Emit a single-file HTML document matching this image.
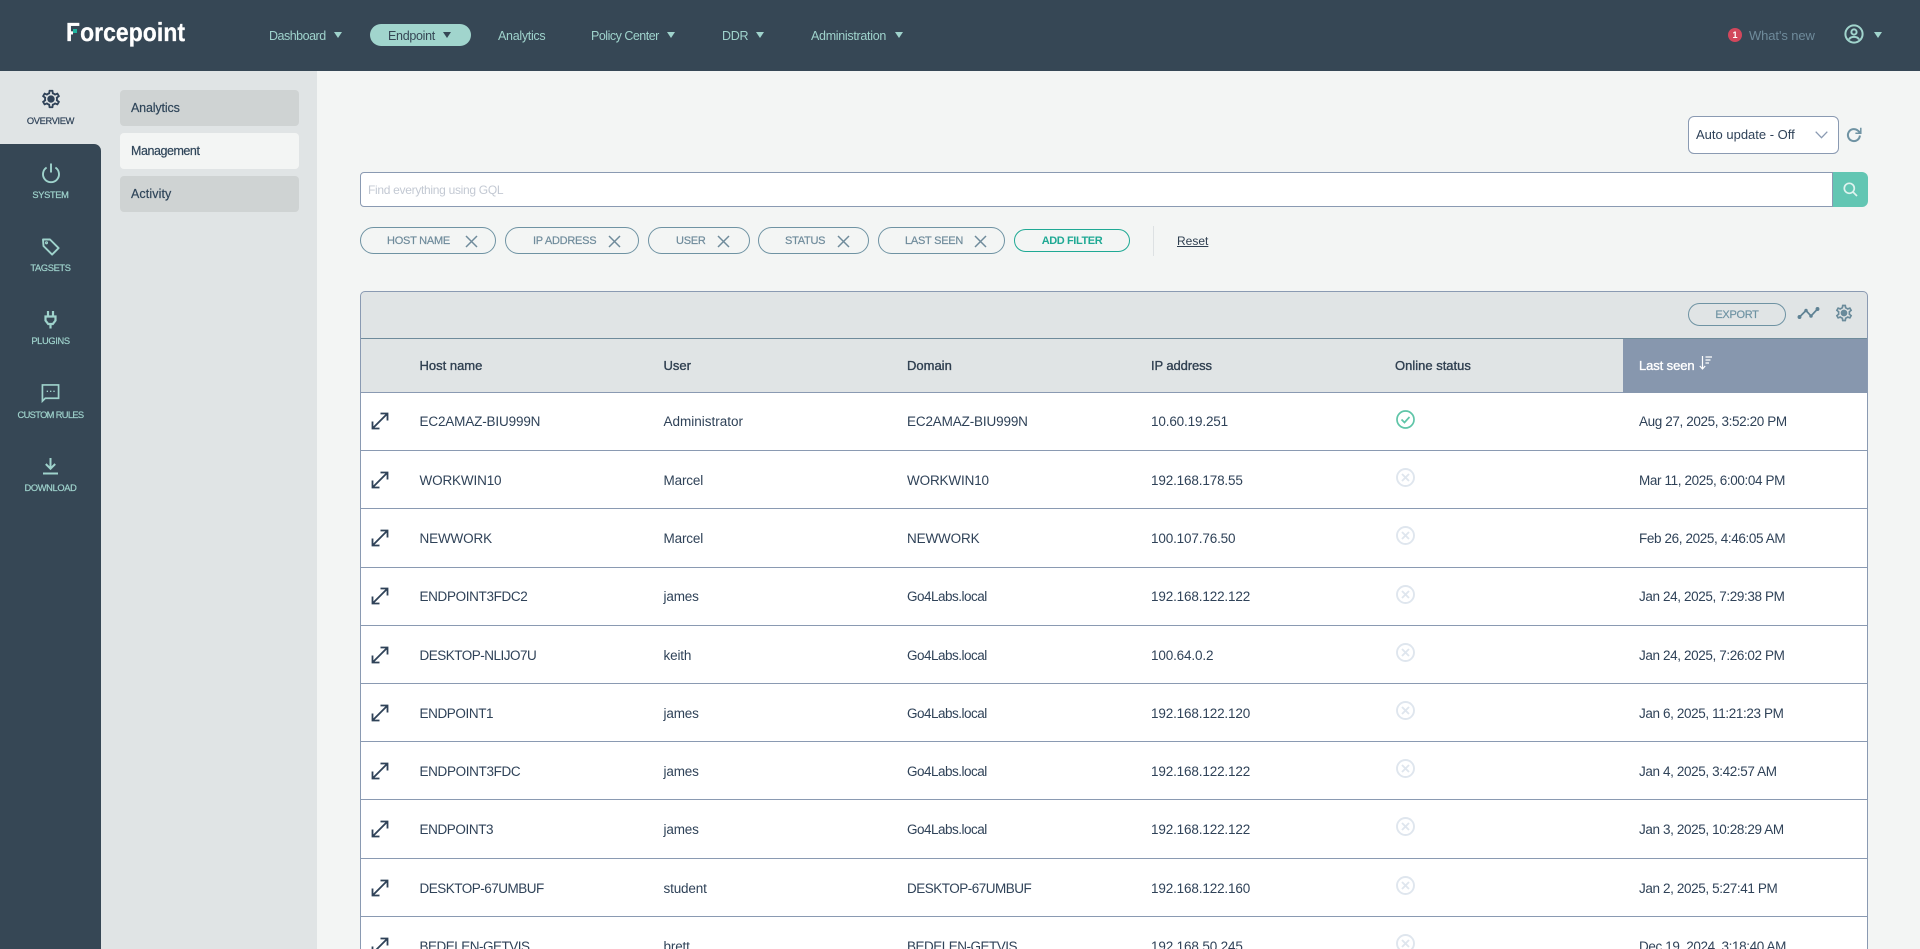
<!DOCTYPE html>
<html><head><meta charset="utf-8"><title>Forcepoint Endpoint Management</title>
<style>
*{box-sizing:border-box}
html,body{margin:0;padding:0;width:1920px;height:949px;overflow:hidden;background:#f3f5f4;font-family:"Liberation Sans",sans-serif;color:#2f4258}
#wrap{position:relative;width:1920px;height:949px;overflow:hidden;background:#f3f5f4}
.a{position:absolute}
.t{position:absolute;white-space:nowrap;line-height:16px}
#top{left:0;top:0;width:1920px;height:71px;background:#364755}
.nav{color:#9fd3cc;font-size:12.5px;letter-spacing:-.3px;top:28px}
.car{position:absolute;width:0;height:0;border-left:4.5px solid transparent;border-right:4.5px solid transparent;border-top:6px solid #9fd3cc;top:32px}
#pill{left:370px;top:24px;width:101px;height:22px;border-radius:11px;background:#a1d5cd}
#side{left:0;top:144px;width:101px;height:805px;background:#364755;border-top-right-radius:7px}
#panel{left:0;top:71px;width:317px;height:878px;background:#e0e4e5}
.sb{position:absolute;left:120px;width:179px;height:36px;border-radius:4px;background:#cfd3d3;font-size:12.5px;line-height:36px;padding-left:11px;color:#30465a;-webkit-text-stroke:.2px #30465a}
.lab{position:absolute;left:0;width:101px;text-align:center;font-size:9.3px;letter-spacing:-.35px;line-height:12px;color:#9fd3cc;-webkit-text-stroke:.2px currentColor}
.ico{position:absolute;display:block;overflow:visible}
.chip{position:absolute;top:227px;height:27px;border:1px solid #6f93a3;border-radius:14px;color:#6f8b9b}
.chip span{position:absolute;top:5px;font-size:11px;letter-spacing:-.25px;line-height:16px;white-space:nowrap;-webkit-text-stroke:.2px #6f8b9b}
.row{position:absolute;left:361px;width:1506px;height:58.2px;background:#fff;border-bottom:1px solid #8a9ab2;font-size:13.5px;color:#2f4258}
.row .t{top:22px;letter-spacing:-.15px}
.row .n{left:10px;top:20px}
.row .s{left:1035px;top:17px}
.row.e .t{top:21px}
.row.e .n{top:19px}
.c1{left:58.5px}.c2{left:302.5px}.c3{left:546px}.c4{left:790px}.row .c6{left:1278px;letter-spacing:-.38px}
.row .m{letter-spacing:-.5px}.row .g{letter-spacing:-.5px}.row .u{letter-spacing:0}
.th{position:absolute;top:358px;font-size:13px;line-height:16px;color:#2f3f50;-webkit-text-stroke:.35px #2f3f50;white-space:nowrap}
</style></head><body><div id="wrap">
<div class="a" id="top"></div>
<div class="t" style="left:66px;top:16px;font-size:26px;line-height:32px;font-weight:700;color:#fff;transform:scaleX(.88);transform-origin:0 0;letter-spacing:.1px;-webkit-text-stroke:.3px #fff">Forcepoint</div>
<div class="a" style="left:72.5px;top:28.5px;width:7.5px;height:6px;background:#364755"></div>
<div class="a" style="left:73px;top:29px;width:4px;height:4px;background:#1fb5a0"></div>

<div class="a" id="pill"></div>
<div class="t nav" style="left:269px;letter-spacing:-.5px">Dashboard</div><div class="car" style="left:334px"></div>
<div class="t nav" style="left:388px;color:#364755">Endpoint</div><div class="car" style="left:443px;border-top-color:#364755"></div>
<div class="t nav" style="left:498px">Analytics</div>
<div class="t nav" style="left:591px;letter-spacing:-.5px">Policy Center</div><div class="car" style="left:667px"></div>
<div class="t nav" style="left:722px">DDR</div><div class="car" style="left:756px"></div>
<div class="t nav" style="left:811px">Administration</div><div class="car" style="left:895px"></div>

<div class="a" style="left:1728px;top:28px;width:14px;height:14px;border-radius:50%;background:#d2475c;color:#fff;font-size:9px;font-weight:700;line-height:14px;text-align:center">1</div>
<div class="t" style="left:1749px;top:28px;font-size:13px;color:#6f8b9b;letter-spacing:-.1px">What's new</div>
<svg class="ico" style="left:1844px;top:24px" width="20" height="20" viewBox="0 0 20 20" fill="none" stroke="#a1d5cd" stroke-width="2"><circle cx="10" cy="10" r="8.6"/><circle cx="10" cy="8" r="2.6"/><path d="M5 15.5c1-2 3-2.6 5-2.6s4 .6 5 2.6"/></svg>
<div class="car" style="left:1874px;top:32px;border-top-color:#a1d5cd"></div>

<div class="a" id="panel"></div>
<div class="a" id="side"></div>
<svg class="ico" style="left:39.5px;top:88px" width="22" height="22" viewBox="0 0 24 24" fill="#2f4258"><path d="M19.43 12.98c.04-.32.07-.64.07-.98 0-.34-.03-.66-.07-.98l2.11-1.65c.19-.15.24-.42.12-.64l-2-3.46c-.09-.16-.26-.25-.44-.25-.06 0-.12.01-.17.03l-2.49 1c-.52-.4-1.08-.73-1.69-.98l-.38-2.65C14.46 2.18 14.25 2 14 2h-4c-.25 0-.46.18-.49.42l-.38 2.65c-.61.25-1.17.59-1.69.98l-2.49-1c-.06-.02-.12-.03-.18-.03-.17 0-.34.09-.43.25l-2 3.46c-.13.22-.07.49.12.64l2.11 1.65c-.04.32-.07.65-.07.98 0 .33.03.66.07.98l-2.11 1.65c-.19.15-.24.42-.12.64l2 3.46c.09.16.26.25.44.25.06 0 .12-.01.17-.03l2.49-1c.52.4 1.08.73 1.69.98l.38 2.65c.03.24.24.42.49.42h4c.25 0 .46-.18.49-.42l.38-2.65c.61-.25 1.17-.59 1.69-.98l2.49 1c.06.02.12.03.18.03.17 0 .34-.09.43-.25l2-3.46c.12-.22.07-.49-.12-.64l-2.11-1.65zm-1.98-1.71c.04.31.05.52.05.73 0 .21-.02.43-.05.73l-.14 1.13.89.7 1.08.84-.7 1.21-1.27-.51-1.04-.42-.9.68c-.43.32-.84.56-1.25.73l-1.06.43-.16 1.13-.2 1.35h-1.4l-.19-1.35-.16-1.13-1.06-.43c-.43-.18-.83-.41-1.23-.71l-.91-.7-1.06.43-1.27.51-.7-1.21 1.08-.84.89-.7-.14-1.13c-.03-.31-.05-.54-.05-.74s.02-.43.05-.73l.14-1.13-.89-.7-1.08-.84.7-1.21 1.27.51 1.04.42.9-.68c.43-.32.84-.56 1.25-.73l1.06-.43.16-1.13.2-1.35h1.39l.19 1.35.16 1.13 1.06.43c.43.18.83.41 1.23.71l.91.7 1.06-.43 1.27-.51.7 1.21-1.07.85-.89.7.14 1.13zM12 8c-2.21 0-4 1.79-4 4s1.79 4 4 4 4-1.79 4-4-1.79-4-4-4z"/></svg>
<div class="lab" style="top:115px;color:#2f4258">OVERVIEW</div>

<svg class="ico" style="left:40.5px;top:163px" width="20" height="20" viewBox="0 0 20 20" fill="none" stroke="#9fd3cc" stroke-width="1.9"><path d="M10 .5v9M5.6 4.5a8 8 0 1 0 8.800 0"/></svg>
<div class="lab" style="top:189px">SYSTEM</div>

<svg class="ico" style="left:40.5px;top:237px" width="20" height="20" viewBox="0 0 20 20" fill="none" stroke="#9fd3cc" stroke-width="1.9"><path d="M2 2.500h7l8.600 8.600-6.500 6.500L2.500 9z" stroke-linejoin="round"/><circle cx="5.500" cy="5.800" r=".6"/></svg>
<div class="lab" style="top:262px">TAGSETS</div>

<svg class="ico" style="left:44px;top:311px" width="13" height="18" viewBox="0 0 13 18" fill="none" stroke="#9fd3cc" stroke-width="2.2"><path d="M4 0v5M9 0v5"/><path d="M1.500 5.500h10v4L8.800 13H4.200L1.500 9.500zM6.500 13v4.500"/></svg>
<div class="lab" style="top:335px">PLUGINS</div>

<svg class="ico" style="left:41px;top:383px" width="19" height="20" viewBox="0 0 20 20" fill="none" stroke="#9fd3cc" stroke-width="1.8"><path d="M2 1.500h16.500v14H4.500L1.500 18.500V1.500z"/><path d="M6 8.200h1.400M9.500 8.200h1.400M13 8.200h1.400" stroke-width="1.400"/></svg>
<div class="lab" style="top:409px;letter-spacing:-.65px">CUSTOM RULES</div>

<svg class="ico" style="left:42px;top:458px" width="17" height="17" viewBox="0 0 17 17" fill="none" stroke="#9fd3cc" stroke-width="2"><path d="M8.500 0v10M3.800 6l4.700 4.700L13.200 6M1 15.500h15"/></svg>
<div class="lab" style="top:482px">DOWNLOAD</div>

<div class="sb" style="top:90px;letter-spacing:-.15px">Analytics</div>
<div class="sb" style="top:133px;background:#f3f5f4;letter-spacing:-.45px">Management</div>
<div class="sb" style="top:176px;letter-spacing:.1px">Activity</div>

<!-- auto update -->
<div class="a" style="left:1688px;top:116px;width:151px;height:38px;background:#fff;border:1px solid #8a9ab2;border-radius:6px"></div>
<div class="t" style="left:1696px;top:127px;font-size:13px;color:#2f4258">Auto update - Off</div>
<svg class="ico" style="left:1815px;top:131px" width="13" height="8" viewBox="0 0 13 8" fill="none" stroke="#8a9ab2" stroke-width="1.3"><path d="M.7.7l5.800 6 5.800-6"/></svg>
<svg class="ico" style="left:1846px;top:127px" width="16" height="16" viewBox="0 0 16 16" fill="none" stroke="#6f93a3" stroke-width="2"><path d="M13.900 8.500a6 6 0 1 1-1.800-4.700L14 5.500"/><path d="M14.800 .8v5.400H9.400" stroke-width="1.500"/></svg>

<!-- search -->
<div class="a" style="left:360px;top:172px;width:1473px;height:35px;background:#fff;border:1px solid #8a9ab2;border-radius:4px 0 0 4px"></div>
<div class="t" style="left:368px;top:182px;font-size:12px;color:#c3c9d3;letter-spacing:-.3px">Find everything using GQL</div>
<div class="a" style="left:1833px;top:172px;width:35px;height:35px;background:#62c6b3;border-radius:0 6px 6px 0"></div>
<svg class="ico" style="left:1843px;top:182px" width="15" height="15" viewBox="0 0 15 15" fill="none" stroke="#dff3ef" stroke-width="1.7"><circle cx="6.300" cy="6.300" r="5"/><path d="M10 10l4 4"/></svg>

<!-- chips -->
<div class="chip" style="left:360px;width:136px"><span style="left:26px">HOST NAME</span><svg class="ico" style="left:104px;top:7px" width="13" height="13" fill="none" stroke="#6f8b9b" stroke-width="1.500"><path d="M1 1l11 11M12 1L1 12"/></svg></div>
<div class="chip" style="left:505px;width:134px"><span style="left:27px">IP ADDRESS</span><svg class="ico" style="left:102px;top:7px" width="13" height="13" fill="none" stroke="#6f8b9b" stroke-width="1.500"><path d="M1 1l11 11M12 1L1 12"/></svg></div>
<div class="chip" style="left:648px;width:102px"><span style="left:27px">USER</span><svg class="ico" style="left:68px;top:7px" width="13" height="13" fill="none" stroke="#6f8b9b" stroke-width="1.500"><path d="M1 1l11 11M12 1L1 12"/></svg></div>
<div class="chip" style="left:758px;width:111px"><span style="left:26px">STATUS</span><svg class="ico" style="left:78px;top:7px" width="13" height="13" fill="none" stroke="#6f8b9b" stroke-width="1.500"><path d="M1 1l11 11M12 1L1 12"/></svg></div>
<div class="chip" style="left:878px;width:127px"><span style="left:26px">LAST SEEN</span><svg class="ico" style="left:95px;top:7px" width="13" height="13" fill="none" stroke="#6f8b9b" stroke-width="1.500"><path d="M1 1l11 11M12 1L1 12"/></svg></div>
<div class="a" style="left:1014px;top:229px;width:116px;height:23px;border:1px solid #1fa994;border-radius:12px;color:#1fa994;font-size:11px;font-weight:700;letter-spacing:-.4px;line-height:22px;text-align:center">ADD FILTER</div>
<div class="a" style="left:1153px;top:226px;width:1px;height:30px;background:#dde1e3"></div>
<div class="t" style="left:1177px;top:233px;font-size:12px;text-decoration:underline;color:#2f3f50">Reset</div>

<!-- table -->
<div class="a" style="left:360px;top:291px;width:1508px;height:700px;border:1px solid #8a9ab2;border-radius:5px 5px 0 0;background:#e0e4e5"></div>
<div class="a" style="left:361px;top:338px;width:1506px;height:1px;background:#6f8b9b"></div>
<div class="a" style="left:361px;top:339px;width:1506px;height:54px;border-bottom:1px solid #8a9ab2"></div>
<div class="a" style="left:1623px;top:339px;width:244px;height:54px;background:#8797ae"></div>
<div class="a" style="left:1688px;top:303px;width:98px;height:23px;border:1px solid #6f93a3;border-radius:12px;color:#6f93a3;font-size:11px;letter-spacing:-.3px;line-height:22px;text-align:center;-webkit-text-stroke:.2px #6f93a3">EXPORT</div>
<svg class="ico" style="left:1798px;top:308px" width="21" height="11" viewBox="0 0 21 11" fill="none" stroke="#5f8294" stroke-width="1.700"><path d="M1 9.500L8 2.500l5 5.500 7-7.500"/><circle cx="1.500" cy="9" r="1.100" fill="#5f8294"/><circle cx="8" cy="2.500" r=".9" fill="#5f8294"/><circle cx="13" cy="8" r=".9" fill="#5f8294"/><circle cx="19.500" cy="1" r="1.100" fill="#5f8294"/></svg>
<svg class="ico" style="left:1834px;top:303px" width="20" height="20" viewBox="0 0 24 24" fill="#6a8b9b"><path d="M19.43 12.98c.04-.32.07-.64.07-.98 0-.34-.03-.66-.07-.98l2.11-1.65c.19-.15.24-.42.12-.64l-2-3.46c-.09-.16-.26-.25-.44-.25-.06 0-.12.01-.17.03l-2.49 1c-.52-.4-1.08-.73-1.69-.98l-.38-2.65C14.46 2.18 14.25 2 14 2h-4c-.25 0-.46.18-.49.42l-.38 2.65c-.61.25-1.17.59-1.69.98l-2.49-1c-.06-.02-.12-.03-.18-.03-.17 0-.34.09-.43.25l-2 3.46c-.13.22-.07.49.12.64l2.11 1.65c-.04.32-.07.65-.07.98 0 .33.03.66.07.98l-2.11 1.65c-.19.15-.24.42-.12.64l2 3.46c.09.16.26.25.44.25.06 0 .12-.01.17-.03l2.49-1c.52.4 1.08.73 1.69.98l.38 2.65c.03.24.24.42.49.42h4c.25 0 .46-.18.49-.42l.38-2.65c.61-.25 1.17-.59 1.69-.98l2.49 1c.06.02.12.03.18.03.17 0 .34-.09.43-.25l2-3.46c.12-.22.07-.49-.12-.64l-2.11-1.65zm-1.98-1.71c.04.31.05.52.05.73 0 .21-.02.43-.05.73l-.14 1.13.89.7 1.08.84-.7 1.21-1.27-.51-1.04-.42-.9.68c-.43.32-.84.56-1.25.73l-1.06.43-.16 1.13-.2 1.35h-1.4l-.19-1.35-.16-1.13-1.06-.43c-.43-.18-.83-.41-1.23-.71l-.91-.7-1.06.43-1.27.51-.7-1.21 1.08-.84.89-.7-.14-1.13c-.03-.31-.05-.54-.05-.74s.02-.43.05-.73l.14-1.13-.89-.7-1.08-.84.7-1.21 1.27.51 1.04.42.9-.68c.43-.32.84-.56 1.25-.73l1.06-.43.16-1.13.2-1.35h1.39l.19 1.35.16 1.13 1.06.43c.43.18.83.41 1.23.71l.91.7 1.06-.43 1.27-.51.7 1.21-1.07.85-.89.7.14 1.13zM12 8c-2.21 0-4 1.79-4 4s1.79 4 4 4 4-1.79 4-4-1.79-4-4-4z"/></svg>

<div class="th" style="left:419.500px">Host name</div>
<div class="th" style="left:663.500px">User</div>
<div class="th" style="left:907px">Domain</div>
<div class="th" style="left:1151px;letter-spacing:-.1px">IP address</div>
<div class="th" style="left:1395px">Online status</div>
<div class="th" style="left:1639px;color:#fff;-webkit-text-stroke:.35px #fff;letter-spacing:-.1px">Last seen</div>
<svg class="ico" style="left:1699px;top:356px" width="14" height="14" viewBox="0 0 14 14" fill="none" stroke="#fff" stroke-width="1.200"><path d="M3.500 0v12.500M.8 10l2.700 3 2.700-3M6.500 1H13M6.500 4h5M6.500 7H10"/></svg>

<div class="row e" style="top:393px"><svg class="ico n" width="18" height="18" viewBox="0 0 18 18" fill="none" stroke="#2f4258" stroke-width="1.800"><path d="M2 16L16 2M9.500 1.500h7v7M1.500 9.500v7h7"/></svg><div class="t c1">EC2AMAZ-BIU999N</div><div class="t c2 u">Administrator</div><div class="t c3">EC2AMAZ-BIU999N</div><div class="t c4">10.60.19.251</div><svg class="ico s" width="19" height="19" viewBox="0 0 19 19" fill="none" stroke="#5fc5a8" stroke-width="1.700"><circle cx="9.500" cy="9.500" r="8.500"/><path d="M5.500 9.500l3 3 5-5.500"/></svg><div class="t c6">Aug 27, 2025, 3:52:20 PM</div></div>

<div class="row" style="top:451.200px"><svg class="ico n" width="18" height="18" viewBox="0 0 18 18" fill="none" stroke="#2f4258" stroke-width="1.800"><path d="M2 16L16 2M9.500 1.500h7v7M1.500 9.500v7h7"/></svg><div class="t c1">WORKWIN10</div><div class="t c2">Marcel</div><div class="t c3">WORKWIN10</div><div class="t c4">192.168.178.55</div><svg class="ico s" width="19" height="19" viewBox="0 0 19 19" fill="none" stroke="#dfe6ee" stroke-width="1.900"><circle cx="9.500" cy="9.500" r="8.500"/><path d="M6 6l7 7M13 6l-7 7"/></svg><div class="t c6">Mar 11, 2025, 6:00:04 PM</div></div>

<div class="row" style="top:509.400px"><svg class="ico n" width="18" height="18" viewBox="0 0 18 18" fill="none" stroke="#2f4258" stroke-width="1.800"><path d="M2 16L16 2M9.500 1.500h7v7M1.500 9.500v7h7"/></svg><div class="t c1">NEWWORK</div><div class="t c2">Marcel</div><div class="t c3">NEWWORK</div><div class="t c4">100.107.76.50</div><svg class="ico s" width="19" height="19" viewBox="0 0 19 19" fill="none" stroke="#dfe6ee" stroke-width="1.900"><circle cx="9.500" cy="9.500" r="8.500"/><path d="M6 6l7 7M13 6l-7 7"/></svg><div class="t c6">Feb 26, 2025, 4:46:05 AM</div></div>

<div class="row e" style="top:567.600px"><svg class="ico n" width="18" height="18" viewBox="0 0 18 18" fill="none" stroke="#2f4258" stroke-width="1.800"><path d="M2 16L16 2M9.500 1.500h7v7M1.500 9.500v7h7"/></svg><div class="t c1" style="letter-spacing:-.35px">ENDPOINT3FDC2</div><div class="t c2">james</div><div class="t c3 g">Go4Labs.local</div><div class="t c4">192.168.122.122</div><svg class="ico s" width="19" height="19" viewBox="0 0 19 19" fill="none" stroke="#dfe6ee" stroke-width="1.900"><circle cx="9.500" cy="9.500" r="8.500"/><path d="M6 6l7 7M13 6l-7 7"/></svg><div class="t c6">Jan 24, 2025, 7:29:38 PM</div></div>

<div class="row" style="top:625.800px"><svg class="ico n" width="18" height="18" viewBox="0 0 18 18" fill="none" stroke="#2f4258" stroke-width="1.800"><path d="M2 16L16 2M9.500 1.500h7v7M1.500 9.500v7h7"/></svg><div class="t c1 m">DESKTOP-NLIJO7U</div><div class="t c2">keith</div><div class="t c3 g">Go4Labs.local</div><div class="t c4">100.64.0.2</div><svg class="ico s" width="19" height="19" viewBox="0 0 19 19" fill="none" stroke="#dfe6ee" stroke-width="1.900"><circle cx="9.500" cy="9.500" r="8.500"/><path d="M6 6l7 7M13 6l-7 7"/></svg><div class="t c6">Jan 24, 2025, 7:26:02 PM</div></div>

<div class="row" style="top:684px"><svg class="ico n" width="18" height="18" viewBox="0 0 18 18" fill="none" stroke="#2f4258" stroke-width="1.800"><path d="M2 16L16 2M9.500 1.500h7v7M1.500 9.500v7h7"/></svg><div class="t c1" style="letter-spacing:-.4px">ENDPOINT1</div><div class="t c2">james</div><div class="t c3 g">Go4Labs.local</div><div class="t c4">192.168.122.120</div><svg class="ico s" width="19" height="19" viewBox="0 0 19 19" fill="none" stroke="#dfe6ee" stroke-width="1.900"><circle cx="9.500" cy="9.500" r="8.500"/><path d="M6 6l7 7M13 6l-7 7"/></svg><div class="t c6">Jan 6, 2025, 11:21:23 PM</div></div>

<div class="row" style="top:742.200px"><svg class="ico n" width="18" height="18" viewBox="0 0 18 18" fill="none" stroke="#2f4258" stroke-width="1.800"><path d="M2 16L16 2M9.500 1.500h7v7M1.500 9.500v7h7"/></svg><div class="t c1" style="letter-spacing:-.35px">ENDPOINT3FDC</div><div class="t c2">james</div><div class="t c3 g">Go4Labs.local</div><div class="t c4">192.168.122.122</div><svg class="ico s" width="19" height="19" viewBox="0 0 19 19" fill="none" stroke="#dfe6ee" stroke-width="1.900"><circle cx="9.500" cy="9.500" r="8.500"/><path d="M6 6l7 7M13 6l-7 7"/></svg><div class="t c6">Jan 4, 2025, 3:42:57 AM</div></div>

<div class="row" style="top:800.400px"><svg class="ico n" width="18" height="18" viewBox="0 0 18 18" fill="none" stroke="#2f4258" stroke-width="1.800"><path d="M2 16L16 2M9.500 1.500h7v7M1.500 9.500v7h7"/></svg><div class="t c1" style="letter-spacing:-.4px">ENDPOINT3</div><div class="t c2">james</div><div class="t c3 g">Go4Labs.local</div><div class="t c4">192.168.122.122</div><svg class="ico s" width="19" height="19" viewBox="0 0 19 19" fill="none" stroke="#dfe6ee" stroke-width="1.900"><circle cx="9.500" cy="9.500" r="8.500"/><path d="M6 6l7 7M13 6l-7 7"/></svg><div class="t c6">Jan 3, 2025, 10:28:29 AM</div></div>

<div class="row" style="top:858.600px"><svg class="ico n" width="18" height="18" viewBox="0 0 18 18" fill="none" stroke="#2f4258" stroke-width="1.800"><path d="M2 16L16 2M9.500 1.500h7v7M1.500 9.500v7h7"/></svg><div class="t c1 m">DESKTOP-67UMBUF</div><div class="t c2">student</div><div class="t c3 m">DESKTOP-67UMBUF</div><div class="t c4">192.168.122.160</div><svg class="ico s" width="19" height="19" viewBox="0 0 19 19" fill="none" stroke="#dfe6ee" stroke-width="1.900"><circle cx="9.500" cy="9.500" r="8.500"/><path d="M6 6l7 7M13 6l-7 7"/></svg><div class="t c6">Jan 2, 2025, 5:27:41 PM</div></div>

<div class="row" style="top:916.800px"><svg class="ico n" width="18" height="18" viewBox="0 0 18 18" fill="none" stroke="#2f4258" stroke-width="1.800"><path d="M2 16L16 2M9.500 1.500h7v7M1.500 9.500v7h7"/></svg><div class="t c1 m">BEDELEN-GETVIS</div><div class="t c2">brett</div><div class="t c3 m">BEDELEN-GETVIS</div><div class="t c4">192.168.50.245</div><svg class="ico s" width="19" height="19" viewBox="0 0 19 19" fill="none" stroke="#dfe6ee" stroke-width="1.900"><circle cx="9.500" cy="9.500" r="8.500"/><path d="M6 6l7 7M13 6l-7 7"/></svg><div class="t c6">Dec 19, 2024, 3:18:40 AM</div></div>
</div></body></html>
